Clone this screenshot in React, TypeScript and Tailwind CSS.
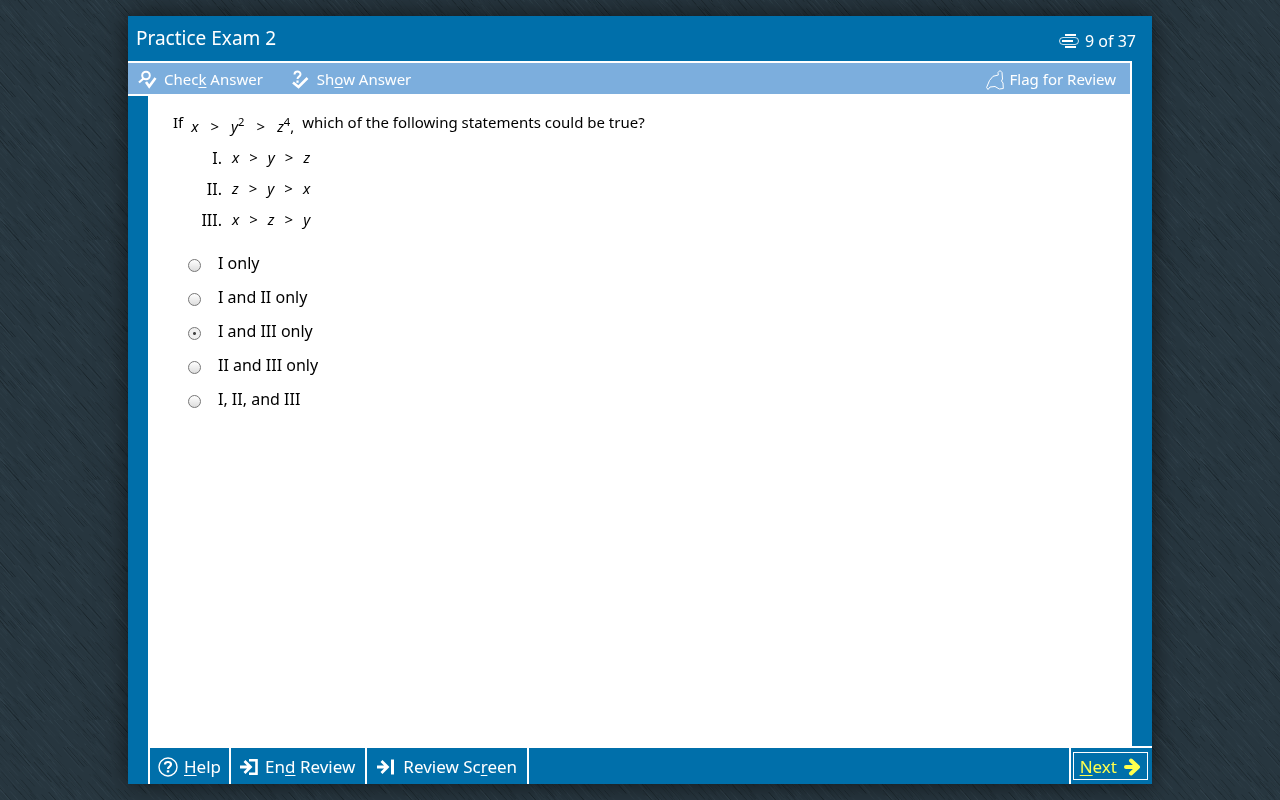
import React, { useState } from 'react';

const CHOICES = ['I only', 'I and II only', 'I and III only', 'II and III only', 'I, II, and III'];

const STATEMENTS = [
  { numeral: 'I.', terms: ['x', 'y', 'z'] },
  { numeral: 'II.', terms: ['z', 'y', 'x'] },
  { numeral: 'III.', terms: ['x', 'z', 'y'] },
];

const TILE = 240;

// fixed seed, so the brushed texture is the same on every render
function makeScratches(count: number) {
  let seed = 7;
  const next = () => {
    seed = (seed * 16807) % 2147483647;
    return seed / 2147483647;
  };
  return Array.from({ length: count }, () => ({
    x: next() * (TILE + 20) - 20,
    y: next() * (TILE + 20) - 20,
    length: 6 + next() * 24,
    light: next() > 0.5,
    opacity: 0.15 + next() * next() * 0.6,
  }));
}

const SCRATCHES = makeScratches(1700);

function BrushedBackground() {
  return (
    <svg className="fixed inset-0 w-full h-full" aria-hidden="true">
      <defs>
        <pattern id="brushed" width={TILE} height={TILE} patternUnits="userSpaceOnUse">
          <rect width={TILE} height={TILE} fill="#27363f" />
          {SCRATCHES.map((s, i) => (
            <path
              key={i}
              d={`M${s.x} ${s.y}l${s.length * 0.7} ${s.length * 0.8}`}
              stroke={s.light ? '#3a4c58' : '#0c1419'}
              strokeWidth="0.7"
              opacity={s.opacity}
            />
          ))}
        </pattern>
      </defs>
      <rect width="100%" height="100%" fill="url(#brushed)" />
    </svg>
  );
}

function CheckAnswerIcon() {
  return (
    <svg width="20" height="20" viewBox="0 0 20 20" fill="none" stroke="currentColor" aria-hidden="true">
      <circle cx="8" cy="5.5" r="3.8" strokeWidth="2" />
      <path d="M5.5 8.5L1 12.5" strokeWidth="2.2" />
      <path d="M8 12L11.2 16.5L17.5 8" strokeWidth="2.6" />
    </svg>
  );
}

function ShowAnswerIcon() {
  return (
    <svg width="20" height="20" viewBox="0 0 20 20" fill="none" stroke="currentColor" aria-hidden="true">
      <path d="M3.5 4.5C3.5 0.5 9.5 0.5 9.5 4.3C9.5 6.800 6.5 6.500 6.5 9" strokeWidth="2" />
      <path d="M6.5 10.500V12.800" strokeWidth="2.200" />
      <path d="M2 12.500L7.500 17L16.500 8" strokeWidth="2.600" />
    </svg>
  );
}

function ProgressIcon() {
  return (
    <svg width="20" height="16" viewBox="0 0 20 16" fill="none" stroke="currentColor" aria-hidden="true">
      <path d="M6 2H17M6 14H17" strokeWidth="2" />
      <rect x="0.5" y="4.5" width="19" height="7" rx="3.5" strokeWidth="1" opacity="0.8" />
      <path d="M3 8H14" strokeWidth="2" />
    </svg>
  );
}

function FlagIcon() {
  return (
    <svg width="20" height="20" viewBox="0 0 20 20" fill="none" stroke="currentColor" strokeLinejoin="round" aria-hidden="true">
      <path d="M14 0.5L12 2.5L12.3 5L7 6.3L3.5 10.5L0.6 17.5L2 19.5L4 17L9 16.5L13.3 19L17.3 18.5L17 13L15.5 11L16.5 9L16 2.5Z" />
    </svg>
  );
}

function HelpIcon() {
  return (
    <svg width="20" height="20" viewBox="0 0 20 20" fill="none" stroke="currentColor" aria-hidden="true">
      <circle cx="10" cy="10" r="9" strokeWidth="1.4" />
      <path d="M7 7.5C7 4.2 13 4.2 13 7.5C13 9.7 10 9.5 10 12" strokeWidth="2.2" />
      <path d="M10 13.3V15.5" strokeWidth="2.4" />
    </svg>
  );
}

function EndReviewIcon() {
  return (
    <svg width="20" height="20" viewBox="0 0 20 20" fill="none" stroke="currentColor" aria-hidden="true">
      <path d="M1 10H11M5.5 4L11.5 10L5.5 16" strokeWidth="2.8" />
      <path d="M10 3.2H17.5V16.8H10" strokeWidth="2.6" />
    </svg>
  );
}

function ReviewScreenIcon() {
  return (
    <svg width="20" height="20" viewBox="0 0 20 20" fill="none" stroke="currentColor" aria-hidden="true">
      <path d="M2 10H12M6.5 4L12.5 10L6.5 16" strokeWidth="2.8" />
      <path d="M17.5 2.5V17.5" strokeWidth="3" />
    </svg>
  );
}

function NextIcon() {
  return (
    <svg width="18" height="20" viewBox="0 0 18 20" fill="none" stroke="currentColor" aria-hidden="true">
      <path d="M3 10H14" strokeWidth="4" strokeLinecap="round" />
      <path d="M8 3.5L15 10L8 16.5" strokeWidth="4" strokeLinecap="round" strokeLinejoin="round" />
    </svg>
  );
}

function Toolbar() {
  const [flagged, setFlagged] = useState(false);

  return (
    <div className="mr-5 flex h-[35px] items-center border-y-2 border-r-2 border-white bg-[#7caedd] pt-0.5 pr-3.5 pl-2.5 text-[15px]">
      <button type="button" className="mr-7 flex items-center gap-1.5">
        <CheckAnswerIcon />
        <span>Chec<u className="underline-offset-2">k</u> Answer</span>
      </button>
      <button type="button" className="flex items-center gap-1.5">
        <ShowAnswerIcon />
        <span>Sh<u className="underline-offset-2">o</u>w Answer</span>
      </button>
      <button
        type="button"
        aria-pressed={flagged}
        onClick={() => setFlagged(!flagged)}
        className="ml-auto flex items-center gap-1"
      >
        <FlagIcon />
        Flag for Review
      </button>
    </div>
  );
}

function Question() {
  const [answer, setAnswer] = useState(2);

  return (
    <main className="mr-5 ml-5 flex-1 bg-white pt-3 pl-[25px] text-[15px] text-black">
      <p className="flex h-7 items-center gap-2">
        If
        <span className="flex gap-3 pt-2">
          <i>x</i>
          <span>&gt;</span>
          <span><i>y</i><sup>2</sup></span>
          <span>&gt;</span>
          <span><i>z</i><sup>4</sup>,</span>
        </span>
        <span>which of the following statements could be true?</span>
      </p>
      <div className="mt-1.5">
        {STATEMENTS.map((s) => (
          <div key={s.numeral} className="flex h-[31px] items-center">
            <span className="w-[59px] pr-2.5 text-right text-base">{s.numeral}</span>
            <span className="flex gap-2.5">
              <i>{s.terms[0]}</i>&gt;<i>{s.terms[1]}</i>&gt;<i>{s.terms[2]}</i>
            </span>
          </div>
        ))}
      </div>
      <div role="radiogroup" aria-label="Answer choices" className="mt-[11px] pl-[15px] text-base">
        {CHOICES.map((choice, i) => (
          <label key={choice} className="flex h-[34px] items-center gap-[17px]">
            <input
              type="radio"
              name="answer"
              checked={answer === i}
              onChange={() => setAnswer(i)}
              className="mt-1 size-[13px] appearance-none rounded-full border border-[#777] bg-linear-to-b from-white to-[#ddd] checked:bg-[radial-gradient(circle,#444_1px,#f0f0f0_2px)]"
            />
            {choice}
          </label>
        ))}
      </div>
    </main>
  );
}

function Footer() {
  return (
    <footer className="ml-5 flex h-[38px] items-stretch border-t-2 border-white text-[17px]">
      <button type="button" className="flex items-center gap-1.5 border-l-2 border-white px-2 pt-0.5">
        <HelpIcon />
        <span><u className="underline-offset-2">H</u>elp</span>
      </button>
      <button type="button" className="flex items-center gap-1.5 border-l-2 border-white pt-0.5 pr-2.5 pl-2">
        <EndReviewIcon />
        <span>En<u className="underline-offset-2">d</u> Review</span>
      </button>
      <button type="button" className="flex items-center gap-2 border-x-2 border-white pt-0.5 pr-2.5 pl-2">
        <ReviewScreenIcon />
        <span>Review Sc<u className="underline-offset-2">r</u>een</span>
      </button>
      <div className="ml-auto flex border-l-2 border-white py-1 pr-1 pl-0.5">
        <button type="button" className="flex items-center gap-1.5 border border-white px-1.5 pt-0.5 text-[#ffff4d]">
          <span><u className="underline-offset-2">N</u>ext</span>
          <NextIcon />
        </button>
      </div>
    </footer>
  );
}

export default function App() {
  return (
    <div className="flex min-h-screen bg-[#25343e] p-4 font-['Noto_Sans',sans-serif] text-white">
      <BrushedBackground />
      <div className="relative mx-auto flex w-full max-w-[1024px] flex-col bg-[#006faa] shadow-[0_0_24px_rgba(0,0,0,0.6)]">
        <header className="flex h-[45px] items-center justify-between pr-4 pl-2">
          <h1 className="text-[19px]">Practice Exam 2</h1>
          <div className="flex items-center gap-1.5 pt-1 text-base">
            <ProgressIcon />
            9 of 37
          </div>
        </header>
        <Toolbar />
        <Question />
        <Footer />
      </div>
    </div>
  );
}
